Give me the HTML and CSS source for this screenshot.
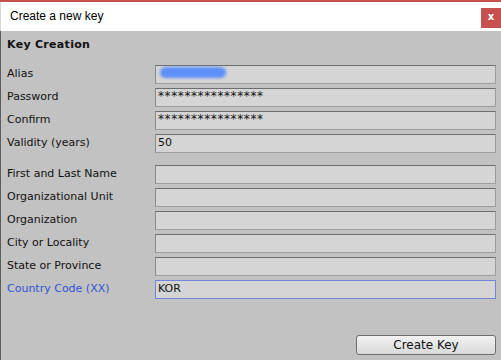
FILE: index.html
```html
<!DOCTYPE html>
<html lang="en">
<head>
    <meta charset="UTF-8">
    <title>Create a new key</title>
    <link rel="stylesheet" href="styles.css">
</head>
<body>
    <div class="window">
        <div class="titlebar">
            <span class="title">Create a new key</span>
            <span class="close">x</span>
        </div>
        <div class="content">
            <div class="section-title">Key Creation</div>

            <div class="group">
                <div class="row">
                    <label>Alias</label>
                    <div class="field"><span class="blur"></span></div>
                </div>
                <div class="row">
                    <label>Password</label>
                    <div class="field masked">****************</div>
                </div>
                <div class="row">
                    <label>Confirm</label>
                    <div class="field masked">****************</div>
                </div>
                <div class="row">
                    <label>Validity (years)</label>
                    <div class="field">50</div>
                </div>
            </div>

            <div class="group">
                <div class="row">
                    <label>First and Last Name</label>
                    <div class="field"></div>
                </div>
                <div class="row">
                    <label>Organizational Unit</label>
                    <div class="field"></div>
                </div>
                <div class="row">
                    <label>Organization</label>
                    <div class="field"></div>
                </div>
                <div class="row">
                    <label>City or Locality</label>
                    <div class="field"></div>
                </div>
                <div class="row">
                    <label>State or Province</label>
                    <div class="field"></div>
                </div>
                <div class="row active">
                    <label>Country Code (XX)</label>
                    <div class="field">KOR</div>
                </div>
            </div>

            <div class="actions">
                <button class="btn-create">Create Key</button>
            </div>
        </div>
    </div>
</body>
</html>
```

FILE: styles.css
```css
body {
    margin: 0;
    padding: 0;
    font-family: "DejaVu Sans", Verdana, sans-serif;
    font-size: 11px;
    color: #111;
}

.window {
    width: 501px;
    height: 360px;
    border-top: 2px solid #c5504e;
    box-sizing: border-box;
    display: flex;
    flex-direction: column;
}

.titlebar {
    height: 29px;
    background-color: #fff;
    display: flex;
    align-items: center;
    justify-content: space-between;
    padding-left: 9px;
    border-left: 1px solid #d8d8d8;
}

.title {
    font-family: "Liberation Sans", Arial, sans-serif;
    font-size: 12px;
    color: #000;
    margin-top: -1px;
}

.close {
    width: 20px;
    height: 20px;
    margin-top: 3px;
    background-color: #c74f4f;
    color: #fff;
    font-weight: bold;
    font-size: 10px;
    line-height: 18px;
    text-align: center;
}

.content {
    flex: 1;
    background-color: #c2c2c2;
    border-left: 1px solid #5c5c5c;
    padding: 0 5px 0 6px;
}

.section-title {
    font-weight: bold;
    line-height: 20px;
    padding-top: 4px;
    letter-spacing: 0.3px;
}

.group {
    display: flex;
    flex-direction: column;
    gap: 4px;
    margin-top: 10px;
}

.group + .group {
    margin-top: 12px;
}

.row {
    display: flex;
    align-items: center;
}

.row label {
    width: 148px;
    line-height: 19px;
    margin-top: -2px;
}

.field {
    flex: 1;
    height: 19px;
    box-sizing: border-box;
    background-color: #d5d5d5;
    border: 1px solid #9d9d9d;
    border-top-color: #6e6e6e;
    border-left-color: #8a8a8a;
    padding: 0 2px;
    line-height: 16px;
    overflow: hidden;
}

.field.masked {
    font-size: 12px;
    letter-spacing: 0.6px;
    line-height: 15px;
}

.row.active label {
    color: #2f55d4;
}

.row.active .field {
    border-color: #7183dc;
}

.blur {
    display: inline-block;
    width: 66px;
    height: 11px;
    margin-left: 2px;
    margin-top: 1px;
    border-radius: 6px;
    background-color: #5d8ff8;
    filter: blur(1.5px);
}

.actions {
    display: flex;
    justify-content: flex-end;
    margin-top: 36px;
}

.btn-create {
    width: 140px;
    height: 20px;
    padding: 0;
    font-family: "DejaVu Sans", Verdana, sans-serif;
    font-size: 12px;
    color: #111;
    border: 1px solid #6e6e6e;
    border-radius: 3px;
    background: linear-gradient(#f2f2f2, #d9d9d9);
}
```
